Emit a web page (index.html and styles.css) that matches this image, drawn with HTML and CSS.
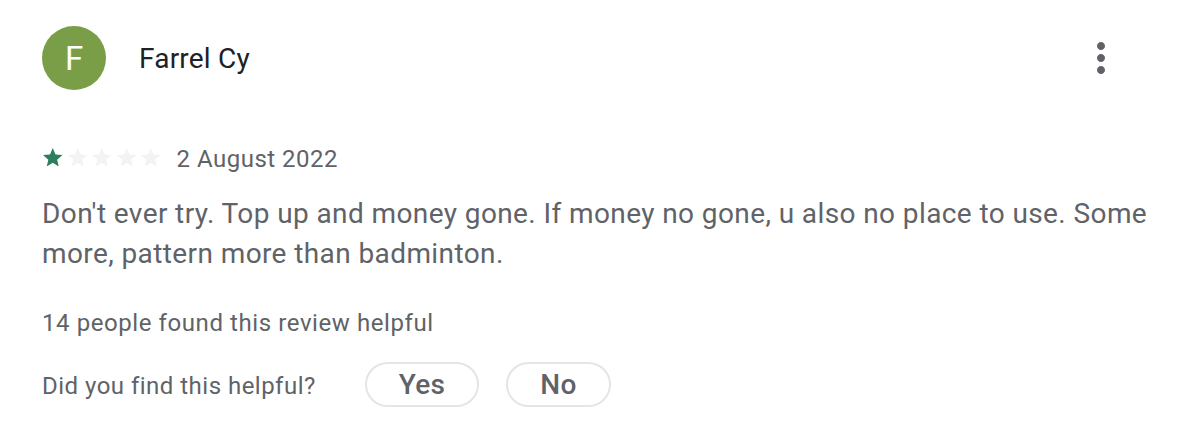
FILE: index.html
```html
<!DOCTYPE html>
<html lang="en">
<head>
<meta charset="utf-8">
<title>Review</title>
<link rel="stylesheet" href="styles.css">
</head>
<body>
<div class="review">
  <header class="review-header">
    <div class="avatar">F</div>
    <div class="name">Farrel Cy</div>
    <button class="more" aria-label="More options">
      <svg width="48" height="48" viewBox="0 0 24 24"><path fill="#5f6368" d="M12 8c1.1 0 2-.9 2-2s-.9-2-2-2-2 .9-2 2 .9 2 2 2zm0 2c-1.1 0-2 .9-2 2s.9 2 2 2 2-.9 2-2-.9-2-2-2zm0 6c-1.1 0-2 .9-2 2s.9 2 2 2 2-.9 2-2-.9-2-2-2z"/></svg>
    </button>
  </header>
  <div class="meta">
    <div class="stars" aria-label="Rated 1 star out of five stars">
      <svg class="star on" viewBox="2 2 20 19"><path d="M12 17.27L18.18 21l-1.64-7.03L22 9.24l-7.19-.61L12 2 9.19 8.63 2 9.24l5.46 4.73L5.82 21z"/></svg>
      <svg class="star" viewBox="2 2 20 19"><path d="M12 17.27L18.18 21l-1.64-7.03L22 9.24l-7.19-.61L12 2 9.19 8.63 2 9.24l5.46 4.73L5.82 21z"/></svg>
      <svg class="star" viewBox="2 2 20 19"><path d="M12 17.27L18.18 21l-1.64-7.03L22 9.24l-7.19-.61L12 2 9.19 8.63 2 9.24l5.46 4.73L5.82 21z"/></svg>
      <svg class="star" viewBox="2 2 20 19"><path d="M12 17.27L18.18 21l-1.64-7.03L22 9.24l-7.19-.61L12 2 9.19 8.63 2 9.24l5.46 4.73L5.82 21z"/></svg>
      <svg class="star" viewBox="2 2 20 19"><path d="M12 17.27L18.18 21l-1.64-7.03L22 9.24l-7.19-.61L12 2 9.19 8.63 2 9.24l5.46 4.73L5.82 21z"/></svg>
    </div>
    <span class="date">2 August 2022</span>
  </div>
  <p class="text">Don't ever try. Top up and money gone. If money no gone, u also no place to use. Some more, pattern more than badminton.</p>
  <div class="helpful-count">14 people found this review helpful</div>
  <div class="helpful-row">
    <span class="question">Did you find this helpful?</span>
    <div class="buttons">
      <button class="pill">Yes</button>
      <button class="pill">No</button>
    </div>
  </div>
</div>
</body>
</html>
```
FILE: styles.css
```css
* { box-sizing: border-box; }
html, body { margin: 0; padding: 0; background: #fff; }
body {
  font-family: Roboto, "Liberation Sans", Arial, sans-serif;
  color: #5f6368;
}
.review {
  padding: 26px 20px 0 42px;
}
.review-header {
  display: flex;
  align-items: center;
  height: 64px;
  padding-right: 53px;
}
.avatar {
  width: 64px;
  height: 64px;
  border-radius: 50%;
  background: #7a9e48;
  color: #fff;
  font-size: 33px;
  display: flex;
  align-items: center;
  justify-content: center;
  flex: none;
}
.name {
  margin-left: 33px;
  font-size: 28px;
  color: #202124;
  letter-spacing: 0.2px;
}
.more {
  margin-left: auto;
  width: 48px;
  height: 48px;
  padding: 0;
  border: 0;
  background: none;
  display: flex;
}
.meta {
  margin-top: 53px;
  height: 28px;
  display: flex;
  align-items: center;
}
.stars {
  display: flex;
  gap: 5px;
  margin-left: 1px;
}
.star {
  width: 19.5px;
  height: 18.5px;
  fill: #f1f3f4;
}
.star.on { fill: #2b7f5c; }
.date {
  margin-left: 16px;
  padding-top: 3px;
  font-size: 24px;
  line-height: 28px;
  letter-spacing: 0.5px;
}
.text {
  margin: 23px 0 0 0;
  font-size: 28px;
  line-height: 40px;
  letter-spacing: 0.4px;
}
.helpful-count {
  margin-top: 33px;
  font-size: 24px;
  line-height: 32px;
  letter-spacing: 0.58px;
}
.helpful-row {
  margin-top: 23px;
  display: flex;
  align-items: center;
}
.question {
  padding-top: 3px;
  font-size: 24px;
  letter-spacing: 0.48px;
}
.buttons {
  display: flex;
  gap: 27px;
  margin-left: 49px;
}
.pill {
  height: 45px;
  padding: 0 32px;
  border: 2px solid #e3e5e8;
  border-radius: 23px;
  background: #fff;
  font-family: Roboto, "Liberation Sans", Arial, sans-serif;
  font-size: 28px;
  font-weight: 500;
  color: #5f6368;
  letter-spacing: 0.3px;
}
```
